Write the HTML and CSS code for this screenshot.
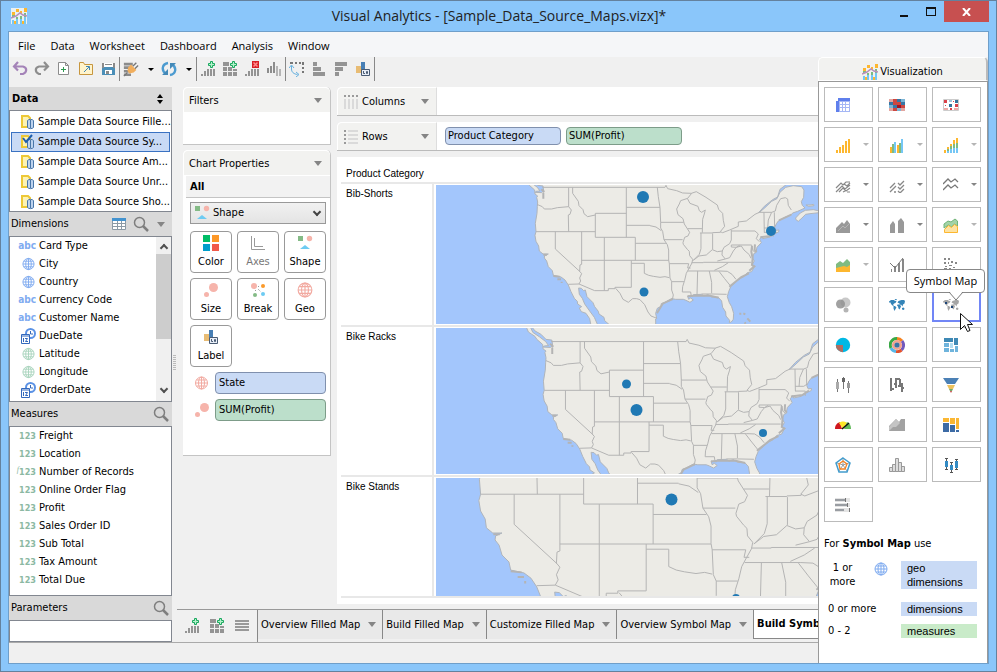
FILE: index.html
```html
<!DOCTYPE html>
<html lang="en">
<head>
<meta charset="utf-8">
<title>Visual Analytics</title>
<link rel="stylesheet" href="styles.css">
</head>
<body>
<svg class="defs" width="0" height="0" aria-hidden="true">
  <symbol id="logo" viewBox="0 0 16 16"><path fill="#fdb72f" d="M1 4h3v3H1zM5 1h3v3H5zM9 3h2v3H9zM13 0h3v4h-3z"/><path fill="#7dbb83" d="M1 7h3v2H1zM5 9h2v2H5zM9 8h2v3H9zM13 5h2v4h-2z"/><path fill="#75c7f5" d="M1 12h2v4H1zM5 11h2v5H5zM9 11h2v5H9zM13 9h2v7h-2z"/><path fill="#fdb72f" d="M3 13h2v3H3zM11 13h2v3h-2z"/><path fill="none" stroke="#b98fbb" stroke-width="1.5" d="M0 10l5-2 4-3 3 2 4 1"/></symbol>
  <symbol id="undo" viewBox="0 0 16 16"><path fill="none" stroke="#a483b8" stroke-width="2.2" d="M6 1L2 5.500l4 4M2 5.500h9c4.500 1 4 6 0 7.500H8"/></symbol>
  <symbol id="redo" viewBox="0 0 16 16"><path fill="none" stroke="#8d8d8d" stroke-width="2.200" d="M10 1l4 4.500-4 4M14 5.500H5c-4.500 1-4 6 0 7.500h2"/></symbol>
  <symbol id="new" viewBox="0 0 16 16"><path fill="#fff" stroke="#8c8c8c" d="M2.500 1.500h7l3 3v9h-10zM9.500 1.500v3h3"/><path stroke="#2e9b50" d="M7.500 6v5M5 8.500h5"/></symbol>
  <symbol id="open" viewBox="0 0 16 16"><path fill="#fff4cc" stroke="#c7963e" d="M1.500 1.500h4l1 2h8v10h-13z"/><path fill="none" stroke="#3f86b5" d="M6 11l5-5M8 5.500h3.500V9"/></symbol>
  <symbol id="save" viewBox="0 0 16 16"><path fill="#4b8fb8" d="M2 2h13v12H2z"/><path fill="#fff" d="M4 2h9v4H4zM5 9h7v4H5z"/><path fill="#8a8a8a" d="M2 2h2v5H2zM13 2h2v5h-2zM5 3h7v1H5zM6 10h3v3H6z"/></symbol>
  <symbol id="plug" viewBox="0 0 18 16"><path fill="#8b8b8b" d="M1 1h10v3H1zM1 5h8v3H1zM1 9h6v3H1zM1 13h8v3H1z"/><path stroke="#777" stroke-width="1.500" d="M11 5l4-4M13 8l4-4M5 12l-4 4"/><path fill="#f1ae5d" d="M9 3l6 6-3 3-5 1-2-3 1-4z"/></symbol>
  <symbol id="sync" viewBox="0 0 16 16"><path fill="none" stroke="#4c9bd0" stroke-width="2.400" d="M7 2C1 3 0 9 5 13M9 14c6-1 7-7 2-11"/><path fill="#4489b7" d="M1 14h6V8zM15 2H9v6z"/></symbol>
  <symbol id="addchart" viewBox="0 0 16 16"><path fill="#949494" d="M1 13h2v2H1zM4 10h2v5H4zM7 8h2v7H7zM10 8h2v7h-2zM13 8h2v7h-2z"/><path fill="#b5f0cb" stroke="#19a95e" d="M10.500.500h2v2h2v2h-2v2h-2v-2h-2v-2h2z"/></symbol>
  <symbol id="addgrid" viewBox="0 0 16 16"><path fill="#949494" d="M1 1h6v4H1zM1 6h4v4H1zM6 6h4v4H6zM11 8h4v2h-4zM1 11h4v4H1zM6 11h4v4H6zM11 11h4v4h-4z"/><path fill="#b5f0cb" stroke="#19a95e" d="M10.500.500h2v2h2v2h-2v2h-2v-2h-2v-2h2z"/></symbol>
  <symbol id="delchart" viewBox="0 0 16 16"><path fill="#949494" d="M1 13h2v2H1zM4 10h2v5H4zM7 8h2v7H7zM10 8h2v7h-2zM13 8h2v7h-2z"/><path fill="#d81f26" d="M8 0h7v7H8z"/><path stroke="#ff8d8d" stroke-width="1.500" d="M9.500 1.500l4 4M13.500 1.500l-4 4"/></symbol>
  <symbol id="bars" viewBox="0 0 16 16"><path fill="#8c8c8c" d="M1 7h2v5H1zM4 5h2v7H4zM7 1h2v11H7z"/><path fill="#b5b5b5" d="M10 5h2v10h-2zM13 8h2v7h-2z"/></symbol>
  <symbol id="swap" viewBox="0 0 16 16"><path fill="#777" d="M1 1h3v2H1zM6 1h2v2H6zM10 1h2v2h-2zM13 1h2v3h-2zM13 6h2v2h-2zM13 10h2v2h-2z"/><path fill="none" stroke="#66b0df" d="M2.500 5v3c0 3 2 5 6 5.500M0 7l2.500-3L5 7M7 11l3 2.500L7 16"/></symbol>
  <symbol id="sortasc" viewBox="0 0 16 16"><path fill="#949494" d="M2 1h4v4H2zM2 6h8v4H2zM2 11h12v4H2z"/></symbol>
  <symbol id="sortdesc" viewBox="0 0 16 16"><path fill="#949494" d="M2 1h12v4H2zM2 6h8v4H2zM2 11h4v4H2z"/></symbol>
  <symbol id="label" viewBox="0 0 16 16"><path fill="#e8bc74" d="M1 5h5v7H1z"/><path fill="#477fb5" d="M6 1h4v11H6z"/><path fill="#e8eef8" stroke="#4a5c74" d="M6.500 8.500h8v6h-8z"/><path fill="none" stroke="#4a5c74" d="M8.500 10v2.500H10M11.500 10.500h1v2h-1z"/></symbol>
  <symbol id="db" viewBox="0 0 16 16"><path fill="#fdf3b4" stroke="#edc836" stroke-width="2" d="M2 2h6l2 2v9H2z"/><path fill="#bed3ee" stroke="#4876a8" d="M7.500 6.500c1-1.500 5-1.500 6 0v7c-1 1.500-5 1.500-6 0zM10.500 6v8"/></symbol>
  <symbol id="check" viewBox="0 0 16 16"><path fill="none" stroke="#1f5dac" stroke-width="2" d="M3 4l3 4 6-7"/></symbol>
  <symbol id="globe" viewBox="0 0 14 14"><circle cx="7" cy="7" r="6" fill="#fff" stroke="currentColor"/><path fill="none" stroke="currentColor" d="M7 1v12M1 7h12M2 4h10M2 10h10"/><ellipse cx="7" cy="7" rx="3" ry="6" fill="none" stroke="currentColor"/></symbol>
  <symbol id="date" viewBox="0 0 16 16"><circle cx="10.500" cy="5.500" r="4.500" fill="#fff" stroke="#5b92e5" stroke-width="2"/><path fill="none" stroke="#3668b8" d="M10.500 3v3H13"/><path fill="#fff" stroke="#3369bd" d="M1.500 6.500h8v9h-8zM1 8h9"/><path fill="none" stroke="#3369bd" d="M3.500 10v4M5 10.500h2.500L5.500 13.500H8"/></symbol>
  <symbol id="search" viewBox="0 0 16 16"><circle cx="6.500" cy="6.500" r="5" fill="none" stroke="#7e7e7e" stroke-width="1.500"/><path stroke="#7e7e7e" stroke-width="2.500" d="M10 10l5 5"/></symbol>
  <symbol id="table" viewBox="0 0 14 12"><path fill="#fff" stroke="#8c9aa5" d="M.5.500h13v11H.500zM5.500 1v11M9.500 1v11M1 5.500h12M1 8.500h12"/><path fill="#4393cf" d="M0 0h14v3H0z"/></symbol>
  <symbol id="shape" viewBox="0 0 16 16"><path fill="#84bb86" d="M1 1h5v5H1z"/><circle cx="12.500" cy="3.500" r="2.700" fill="#f6b4ab"/><path fill="#6dcbf2" d="M8 10l5 4H3z"/></symbol>
  <symbol id="color" viewBox="0 0 16 16"><path fill="#00bd66" d="M0 0h7v7H0z"/><path fill="#fd9827" d="M9 0h7v7H9z"/><path fill="#009ecb" d="M0 9h7v7H0z"/><path fill="#f15a4a" d="M9 9h7v7H9z"/></symbol>
  <symbol id="axes" viewBox="0 0 16 16"><path fill="none" stroke="#999" d="M1.500 1v13.500H15M4.500 3v8.500H13"/></symbol>
  <symbol id="size" viewBox="0 0 16 16"><g fill="#f6b4ab"><circle cx="10.500" cy="5.500" r="4.500"/><circle cx="3.500" cy="12.500" r="2.500"/></g></symbol>
  <symbol id="break" viewBox="0 0 16 16"><circle cx="4" cy="4" r="3" fill="#f6b4ab"/><circle cx="13" cy="4" r="2" fill="#fb9a2b"/><circle cx="5" cy="13" r="2" fill="#84bb86"/><circle cx="13" cy="12" r="2" fill="#6dcbf2"/><path stroke="#999" stroke-dasharray="1 1" d="M8 4.500h2M8 7l3 3M5.500 8v2"/></symbol>
  <symbol id="colsi" viewBox="0 0 14 14"><path stroke="#9a9a9a" stroke-width="2" stroke-dasharray="2 2" d="M0 1h14"/><path stroke="#dadada" stroke-width="2" d="M1 4v10M5 4v10M9 4v10M13 4v10"/></symbol>
  <symbol id="rowsi" viewBox="0 0 14 14"><path stroke="#9a9a9a" stroke-width="2" stroke-dasharray="2 2" d="M1 0v14"/><path stroke="#dadada" stroke-width="2" d="M4 1h10M4 5h10M4 9h10M4 13h10"/></symbol>
  <symbol id="updown" viewBox="0 0 8 10"><path d="M4 0l3 4H1zM4 10l3-4H1z"/></symbol>
  <symbol id="list" viewBox="0 0 16 16"><path fill="#999" d="M1 2h14v2H1zM1 5h14v2H1zM1 8h14v2H1zM1 11h14v2H1z"/></symbol>

  <symbol id="v1" viewBox="0 0 16 16"><path fill="#5f7fec" d="M3 1h12v3H3zM1 4h3v11H1z"/><path fill="#a5b7f5" d="M4 4h11v11H4z"/><path fill="#fff" d="M5 5h2v2H5zM8 5h2v2H8zM11 5h3v2h-3zM5 8h2v2H5zM8 8h2v2H8zM11 8h3v2h-3zM5 11h2v3H5zM8 11h2v3H8zM11 11h3v3h-3z"/></symbol>
  <symbol id="v2" viewBox="0 0 16 16"><path fill="#3776a5" d="M0 2h16v12H0z"/><path fill="#cd4740" d="M4 2h4v3H4zM4 5h4v3H4zM8 5h4v3H8zM4 11h4v3H4zM12 8h4v3h-4z"/><path fill="#7db5d5" d="M12 2h4v3h-4zM0 8h4v3H0zM8 11h4v3H8z"/><path fill="#e2a5a0" d="M0 2h4v3H0zM0 11h4v3H0zM12 11h4v3h-4z"/><path fill="#a51220" d="M8 8h4v3H8z"/></symbol>
  <symbol id="v3" viewBox="0 0 16 16"><path fill="#fff" stroke="#ccc" d="M.5 2.500h15v11H.500z"/><path fill="#d9424b" d="M1 3h3v3H1zM12 7h3v3h-3zM7 11h2v2H7zM2 8h1v1H2zM10 4h1v1h-1z"/><path fill="#33749c" d="M6 7h3v3H6zM12 3h3v3h-3z"/><path fill="#edaaa7" d="M1 11h4v2H1zM11 11h4v2h-4z"/><path fill="#9fc6dd" d="M6 3h3v2H6z"/></symbol>
  <symbol id="v4" viewBox="0 0 16 16"><path fill="#fdb72f" d="M1 13h2v3H1zM4 10h2v6H4zM7 8h2v8H7zM10 4h2v12h-2zM13 2h2v14h-2z"/></symbol>
  <symbol id="v5" viewBox="0 0 16 16"><path fill="#fdb72f" d="M1 10h2v6H1zM8 8h2v8H8z"/><path fill="#80bb81" d="M3 7h2v9H3zM10 6h2v10h-2z"/><path fill="#75c7f5" d="M5 5h2v11H5zM12 2h2v14h-2z"/></symbol>
  <symbol id="v6" viewBox="0 0 16 16"><path fill="#fdb72f" d="M1 13h2v3H1zM4 10h2v3H4zM7 7h2v3H7zM10 3h2v4h-2zM13 1h2v5h-2z"/><path fill="#80bb81" d="M4 12h2v2H4zM7 9h2v3H7zM10 7h2v4h-2zM13 6h2v5h-2z"/><path fill="#75c7f5" d="M4 14h2v2H4zM7 12h2v4H7zM10 11h2v5h-2zM13 11h2v5h-2z"/></symbol>
  <symbol id="v7" viewBox="0 0 16 16"><g fill="none" stroke="#888" stroke-width="1.200"><path d="M1 11l5-5 2 2 3-3 4 0M1 15l6-6 3 3 5-4M4 15l4-4 3 3 4-3M9 7l3 2 3-3M8 15l2-1M12 15h3"/></g></symbol>
  <symbol id="v8" viewBox="0 0 16 16"><g fill="none" stroke="#888" stroke-width="1.300"><path d="M1 11l5-5M1 15l6-6M9 6l2 2 4-4M9 10l2 2 4-4M9 14l2 2 4-4M5 15h2"/></g></symbol>
  <symbol id="v9" viewBox="0 0 16 16"><g fill="none" stroke="#777" stroke-width="1.300"><path d="M0 7l5-5 3 3 4-3 3 3M0 13l5-5 3 3 4-3 3 3"/></g></symbol>
  <symbol id="v10" viewBox="0 0 16 16"><path fill="#999" d="M1 16v-5l6-6 2 2 3-4 3 4v9z"/><path fill="none" stroke="#b5b5b5" d="M3 14l5-5 2 2 4-4"/></symbol>
  <symbol id="v11" viewBox="0 0 16 16"><path fill="#999" d="M1 16V8l3-4 2 3v9zM9 16V4l3-3 3 4v11z"/></symbol>
  <symbol id="v12" viewBox="0 0 16 16"><path fill="#a3d3a7" stroke="#70b478" d="M1 11V7l4-3 3 1 4-3 2.500 2v5l-3-2-3 3-3-2z"/><path fill="#fde2a2" stroke="#fdb72f" d="M1.500 15.500v-3l4-4 3 2 3-3 3 2v6z"/></symbol>
  <symbol id="v13" viewBox="0 0 16 16"><path fill="#fdb72f" d="M1 15v-5l6-1 4-1 4-3v10z"/><path fill="#80bb81" d="M1 11V7l4-3 3 2 4-4 3 3v3l-3 2-3-1-4 1z"/></symbol>
  <symbol id="v14" viewBox="0 0 16 16"><path fill="#888" d="M2 12h1v3H2zM5 9h2v6H5zM9 6h2v9H9zM13 2h2v13h-2z"/><path fill="none" stroke="#777" d="M1 6l5 5 4-5 4-5"/></symbol>
  <symbol id="v15" viewBox="0 0 16 16"><path fill="#888" d="M1 1h2v2H1zM5 1h2v2H5zM1 5h2v2H1zM5 5h1v2H5zM8 4h2v2H8zM12 5h2v2h-2zM2 9h2v1H2zM6 8h3v1H6zM1 11h3v2H1zM6 11h2v2H6zM10 10h2v1h-2zM2 14h3v1H2zM9 13h2v1H9z"/></symbol>
  <symbol id="v16" viewBox="0 0 16 16"><circle cx="10.500" cy="5.500" r="5" fill="#c8c8c8"/><circle cx="5.500" cy="7" r="4.500" fill="#909090" opacity=".85"/><circle cx="11" cy="13" r="2.500" fill="#b4b4b4"/></symbol>
  <symbol id="world" viewBox="0 0 16 12"><path fill="currentColor" d="M0 2.500L2 1h3l1 1 1.500 0L6.500 4 5 4.500 4 6 5 7H4L2 5 1.500 3.500H0zM5.500 0h2.500L7 1.500zM4.500 7h1.500l1.500 1.500L6.500 10l-1 2-1-2.500zM8.500 3.500l1-1.500 3-1h2.500l1 1-.5 2.500-1.500 1-.5 2-1.500-2-1 .5-.5-1.500zM8.500 5.500h2.500l1 2-1.500 3-1-1-.500-2-1-1zM13 9l1.500-.5 1 1-.500 1.500-2-.500z"/></symbol>
  <symbol id="v19" viewBox="0 0 16 16"><circle cx="8" cy="8" r="7.200" fill="#00b8e4"/><path fill="#b06d61" d="M8 8v7.200A7.200 7.200 0 0 1 .8 8z"/></symbol>
  <symbol id="v20" viewBox="0 0 16 16"><g fill="none"><g stroke-width="3"><path stroke="#f58220" d="M8 1.500A6.500 6.500 0 0 1 13 4"/><path stroke="#7159bd" d="M13 4a6.500 6.500 0 0 1-.500 9"/><path stroke="#e2522d" d="M12.500 13A6.500 6.500 0 0 1 7 14.500"/><path stroke="#57b7e8" d="M7 14.500A6.500 6.500 0 0 1 2 11"/><path stroke="#39a845" d="M2 11A6.500 6.500 0 0 1 8 1.500"/></g><circle cx="8" cy="8" r="3.800" stroke="#f2a28e" stroke-width="2.500"/></g><circle cx="8" cy="8" r="2.600" fill="#3a73a5"/></symbol>
  <symbol id="v21" viewBox="0 0 16 16"><path fill="#3e89b5" d="M1 1h9v4H1zM11 1h4v7h-4z"/><path fill="#6fb4dc" d="M1 6h5v4H1zM1 11h5v4H1zM7 12h4v3H7zM12 9h3v6h-3z"/><path fill="#b3ddf1" d="M7 6h3v5H7z"/></symbol>
  <symbol id="v22" viewBox="0 0 16 16"><path stroke="#777" d="M2.500 2v13M8.500 0v12M13.500 4v12"/><path fill="#aaa" d="M1 5h3v7H1z"/><path fill="#666" d="M7 1h3v4H7z"/><path fill="#999" d="M12 6h3v5h-3z"/></symbol>
  <symbol id="v23" viewBox="0 0 16 16"><path fill="none" stroke="#777" stroke-width="2" d="M2 1v13M2 12h3M7 1v10M5 7h2M7 2h4M11 2v8M9 9h2M13 6v9M13 11h2"/></symbol>
  <symbol id="v24" viewBox="0 0 16 16"><path fill="#4b80b5" d="M0 1h16l-4 6H4z"/><path fill="#edc25e" d="M4 8h8l-2 4H6z"/><path fill="#75a766" d="M6 12h4l-1 2H7z"/><path fill="#c03b3b" d="M7 14h2l-1 2z"/></symbol>
  <symbol id="v25" viewBox="0 0 16 16"><path fill="#cf1820" d="M0 12c0-4 2-6 5-7l2 7z"/><path fill="#ffe629" d="M4 6c2-2 6-2 8 0l-4 6z"/><path fill="#62ba5b" d="M12 5c3 1 4 4 4 7H9z"/><path stroke="#111" stroke-width="1.500" d="M7 12l7-6"/></symbol>
  <symbol id="v26" viewBox="0 0 16 16"><path fill="#a2a2a2" d="M0 14V9l7-7 3 3 2-3h4v12z"/><path fill="#c4c4c4" d="M0 14v-4l7-8 4 4-4 4-3 0z"/></symbol>
  <symbol id="v27" viewBox="0 0 16 16"><path fill="#fbb733" d="M0 1h6v4H0zM7 1h5v6H7zM13 1h3v11h-3z"/><path fill="#3d6ba5" d="M0 6h6v9H0zM7 8h5v7H7zM13 13h3v2h-3z"/></symbol>
  <symbol id="v28" viewBox="0 0 16 16"><g fill="none"><path stroke="#888" stroke-width=".8" d="M8 8V1M8 8l6-2M8 8l4 6M8 8l-4 6M8 8L2 6"/><path stroke="#429ccd" stroke-width="1.500" d="M8 1l7 5-3 9H4L1 6z"/><path stroke="#f58220" stroke-width="1.300" d="M8 4l4 3-2 5H5L4 7z"/></g></symbol>
  <symbol id="v29" viewBox="0 0 16 16"><path fill="#ddd" stroke="#999" d="M.5 14.500v-4h3v4zM3.500 14.500v-7h3v7zM6.500 14.500v-13h3v13zM9.500 14.500v-9h3v9zM12.500 14.500v-5h3v5z"/></symbol>
  <symbol id="v30" viewBox="0 0 16 16"><path stroke="#555" d="M3.500 1v12M2 1.500h3M2 12.500h3M8.500 5v11M7 5.500h3M7 15.500h3M13.500 2v11M12 2.500h3M12 12.500h3"/><path fill="#338bc4" d="M2 4h3v6H2zM7 8h3v5H7zM12 4h3v7h-3z"/></symbol>
  <symbol id="v31" viewBox="0 0 16 16"><path fill="#e4e4e4" d="M0 1h15v4H0zM0 6h15v4H0zM0 11h15v4H0z"/><path fill="#999da2" d="M0 2h10v2H0zM0 7h13v2H0zM0 12h9v2H0z"/><path stroke="#777" d="M10.500 1v4M12.500 6v4M14.500 11v4"/></symbol>

  <g id="usa">
    <g class="sea">
      <path d="M549 270L560 296L578 308L583 316L599 330L600 342L608 348L605 352L608 366L607 380L606 400L601 430L603 455L600 466L603 484L611 498L613 513L624 522L640 522L629 527L628 534L635 543L640 560L652 572L655 586L678 591L690 600L700 615L708 635L718 655L727 664L728 672L740 680L733 684L739 695L753 700L764 716L768 736L770 800H200V270z"/>
      <path d="M731 624L739 625L746 632L751 630L756 650L774 668L779 680L790 694L792 702L807 712L809 722L824 735V800H790L786 730L778 712L764 693L749 672L742 655L733 643z"/>
      <path d="M560 270L578 293L594 302L608 316L624 318L626 332L620 338L600 337L603 334L615 333L607 322L590 309L572 297z"/>
      <g transform="translate(885 210)">
        <path d="M78 600L77 507L80 505L77 490L82 475L93 469L94 461L105 457L125 446L137 448L160 448L168 451L180 457L190 450L182 444L176 448L173 438L188 440L190 434L215 433L222 438L234 434L245 441L265 442L275 453L278 472L287 486L288 498L299 511L298 518L304 516L310 508L311 490L305 470L298 458L292 440L296 425L302 411L318 395L330 386L342 380L352 368L365 365L374 348L366 345L373 333L368 325L372 310L378 308L381 292L394 278L389 268L396 259L398 266L420 261L428 254L435 250L446 246L447 240L438 241L434 232L440 220L446 212L465 202L483 195L488 189L503 184L525 174L517 166L514 155L521 142L522 120L515 110L490 107L467 112L450 127L441 146L425 154L405 173L390 186L386 188L403 169L428 149L443 141L450 118L466 106L482 94L600 80V600z"/>
        <path class="land" d="M497 204L511 189L526 181L550 179L564 182L578 187L540 191L527 193L516 204L505 214L498 209zM528 165L536 169L552 167L551 163L540 165zM550 96L564 94V104L555 103z"/>
      </g>
    </g>
    <g class="line">
      <path d="M622 322H990M608 374L622 380L628 387L650 387L667 383L701 380M701 322V380L709 390L705 403L700 405L701 455M713 322V340L730 364L732 377L744 389L747 401L758 410L781 405M781 400H874M781 400V472H901M874 322V472M874 382H975M874 436H945M603 455H781M661 455V507L735 575M740 455V553L735 555L734 574L740 581L734 594L737 603L732 612L700 613M732 612L779 632H820V626H840V622H889M808 472V632M740 541H1001M901 472V541M901 490H993M889 541V622M889 550H928V580L941 586L955 589L975 592L990 590L1003 593M842 625L855 640L864 658L880 667L893 656L905 656L915 659L929 674L939 696L948 708L966 715"/>
      <g transform="translate(885 210)">
        <path d="M105 112L108 106L113 116L140 122L158 129L184 130L199 125L228 142L262 165L266 178L278 190L280 211L284 229L271 245L278 248L299 240L325 229L325 216L349 213L375 193L388 187L425 187L436 183L440 166L452 146L466 143L473 147L475 166L484 180M60 227L78 231L94 242M82 112L85 140L90 172L92 217H161M92 217L92 234L98 244L102 269H158M102 269L112 284L116 300V330L118 341H176L173 354L182 354M118 341L120 384L125 395H162M125 395V420L130 435L127 450M185 130L173 145L152 152L148 162L140 177L144 194L159 206L163 222L172 236H216M172 145L180 160L204 169L208 182L215 187L226 180L223 192L218 208L217 248M172 236L179 247L174 258L164 262L159 278L160 283L172 298L178 304L179 317L188 328L186 339L176 357L169 370L164 391L158 410L157 426H182L184 439M213 249V296L208 313L190 331M210 249H247M247 248L272 247M248 250V298M190 331L207 318L229 315L247 299L262 305L277 303L282 292L299 281L304 270V240M304 243H375L385 252L379 266L388 275M304 285H365L369 302L376 307M402 187L403 247M425 187L415 210L413 235M433 187L434 230M402 234H426L435 228M402 247H430V260M277 303L276 315L286 327L299 323L310 303L319 292L334 288L342 300L358 314L363 325M304 285V291L319 292L329 286M262 333L286 327M185 338H220V337H363M295 338L277 350L253 361M174 363H270L292 364L306 373L318 388M267 364L284 386L301 407M203 363L201 437M238 363L245 397V430M215 432H245L290 433"/>
        <path class="shore" d="M173 439L190 437L240 437L266 443M366 288L364 305L368 325L366 345L373 349L358 362M375 283L374 299L380 306M391 262L422 258L440 246M447 211L484 194M81 490L98 461L128 447M298 410L334 381L357 370M328 491h6M340 490l6 3M352 505l9 10M344 517l3 4"/>
      </g>
      <path class="shore" d="M625 338V356M619 328L628 336M625 524H636M655 588L674 590M667 598H678M680 605V609"/>
    </g>
  </g>
</svg>

<div class="window">
  <header class="titlebar">
    <svg class="i logo"><use href="#logo"/></svg>
    <h1>Visual Analytics - [Sample_Data_Source_Maps.vizx]*</h1>
    <div class="winbtns">
      <button aria-label="Minimize"><i class="min"></i></button>
      <button aria-label="Maximize"><i class="max"></i></button>
      <button class="close" aria-label="Close"><svg width="9" height="8" viewBox="0 0 9 8"><path stroke="#fff" stroke-width="2" d="M1 0l7 8M8 0L1 8"/></svg></button>
    </div>
  </header>

  <div class="client">
    <nav class="menu"><button>File</button><button>Data</button><button>Worksheet</button><button>Dashboard</button><button>Analysis</button><button>Window</button></nav>

    <div class="body">
      <div class="left">
        <div class="toolbar">
          <button aria-label="Undo"><svg class="i"><use href="#undo"/></svg></button>
          <button aria-label="Redo"><svg class="i"><use href="#redo"/></svg></button>
          <button aria-label="New"><svg class="i"><use href="#new"/></svg></button>
          <button aria-label="Open"><svg class="i"><use href="#open"/></svg></button>
          <button aria-label="Save"><svg class="i"><use href="#save"/></svg></button>
          <span class="sep"></span>
          <button class="drop" aria-label="Connect"><svg class="i"><use href="#plug"/></svg><i class="caret dark"></i></button>
          <button class="drop" aria-label="Refresh"><svg class="i"><use href="#sync"/></svg><i class="caret dark"></i></button>
          <span class="sep"></span>
          <button aria-label="Add worksheet"><svg class="i"><use href="#addchart"/></svg></button>
          <button aria-label="Add dashboard"><svg class="i"><use href="#addgrid"/></svg></button>
          <button aria-label="Delete worksheet"><svg class="i"><use href="#delchart"/></svg></button>
          <button aria-label="Duplicate"><svg class="i"><use href="#bars"/></svg></button>
          <span class="sep"></span>
          <button aria-label="Swap axes"><svg class="i"><use href="#swap"/></svg></button>
          <button aria-label="Sort ascending"><svg class="i"><use href="#sortasc"/></svg></button>
          <button aria-label="Sort descending"><svg class="i"><use href="#sortdesc"/></svg></button>
          <button aria-label="Labels"><svg class="i"><use href="#label"/></svg></button>
          <span class="sep"></span>
        </div>

        <div class="work">
          <aside class="sidebar">
            <h2 class="main"><span>Data</span><svg width="8" height="10"><use href="#updown"/></svg></h2>
            <ul class="box sources">
              <li><svg class="i"><use href="#db"/></svg>Sample Data Source Fille...</li>
              <li class="sel"><svg class="i"><use href="#db"/><use href="#check"/></svg>Sample Data Source Sy...</li>
              <li><svg class="i"><use href="#db"/></svg>Sample Data Source Am...</li>
              <li><svg class="i"><use href="#db"/></svg>Sample Data Source Unr...</li>
              <li><svg class="i"><use href="#db"/></svg>Sample Data Source Sho...</li>
            </ul>
            <h2><span>Dimensions</span><svg width="14" height="12"><use href="#table"/></svg><svg class="i"><use href="#search"/></svg><i class="caret"></i></h2>
            <div class="box dims">
              <ul class="fields">
                <li><b class="abc">abc</b>Card Type</li>
                <li><svg class="g blue"><use href="#globe"/></svg>City</li>
                <li><svg class="g blue"><use href="#globe"/></svg>Country</li>
                <li><b class="abc">abc</b>Currency Code</li>
                <li><b class="abc">abc</b>Customer Name</li>
                <li><svg class="i"><use href="#date"/></svg>DueDate</li>
                <li><svg class="g green"><use href="#globe"/></svg>Latitude</li>
                <li><svg class="g green"><use href="#globe"/></svg>Longitude</li>
                <li><svg class="i"><use href="#date"/></svg>OrderDate</li>
              </ul>
              <div class="scroll"><i class="up"></i><span class="thumb"></span><i class="down"></i></div>
            </div>
            <h2><span>Measures</span><svg class="i"><use href="#search"/></svg></h2>
            <ul class="box fields meas">
              <li><b class="num">123</b>Freight</li>
              <li><b class="num">123</b>Location</li>
              <li><b class="num"><em>f</em>123</b>Number of Records</li>
              <li><b class="num">123</b>Online Order Flag</li>
              <li><b class="num">123</b>Profit</li>
              <li><b class="num">123</b>Sales Order ID</li>
              <li><b class="num">123</b>Sub Total</li>
              <li><b class="num">123</b>Tax Amount</li>
              <li><b class="num">123</b>Total Due</li>
            </ul>
            <h2><span>Parameters</span><svg class="i"><use href="#search"/></svg></h2>
            <div class="box params"></div>
          </aside>
          <div class="grip"><i></i></div>

          <div class="stage">
            <div class="panes">
              <section class="props">
                <div class="card filters">
                  <h3><span>Filters</span><i class="caret"></i></h3>
                </div>
                <div class="card chart">
                  <h3><span>Chart Properties</span><i class="caret"></i></h3>
                  <h4>All</h4>
                  <div class="marks">
                    <button class="combo"><svg class="i"><use href="#shape"/></svg><span>Shape</span><i class="chev"></i></button>
                    <div class="tiles">
                      <button><svg class="i"><use href="#color"/></svg>Color</button>
                      <button class="off"><svg class="i"><use href="#axes"/></svg>Axes</button>
                      <button><svg class="i"><use href="#shape"/></svg>Shape</button>
                      <button><svg class="i"><use href="#size"/></svg>Size</button>
                      <button><svg class="i"><use href="#break"/></svg>Break</button>
                      <button><svg class="i pink"><use href="#globe"/></svg>Geo</button>
                      <button><svg class="i"><use href="#label"/></svg>Label</button>
                    </div>
                    <div class="enc"><svg class="g pink"><use href="#globe"/></svg><span class="pill dim">State</span></div>
                    <div class="enc"><svg class="i"><use href="#size"/></svg><span class="pill mea">SUM(Profit)</span></div>
                  </div>
                </div>
              </section>

              <main class="canvas">
                <div class="shelf"><div class="head"><svg class="g"><use href="#colsi"/></svg><span>Columns</span><i class="caret"></i></div></div>
                <div class="shelf"><div class="head"><svg class="g"><use href="#rowsi"/></svg><span>Rows</span><i class="caret"></i></div><span class="pill dim">Product Category</span><span class="pill mea">SUM(Profit)</span></div>
                <div class="sheet">
                  <table>
                    <thead><tr><th colspan="2">Product Category</th></tr></thead>
                    <tbody>
                      <tr><th>Bib-Shorts</th><td><svg class="map" height="139"><use href="#usa" transform="scale(.3333) translate(-303 -315)"/><circle cx="207" cy="12" r="6"/><circle cx="335" cy="46" r="5"/><circle cx="208" cy="107" r="4.500"/></svg></td></tr>
                      <tr><th>Bike Racks</th><td><svg class="map" height="146"><use href="#usa" transform="scale(.3667) translate(-308 -285)"/><circle cx="190.500" cy="56" r="4.500"/><circle cx="200.500" cy="82" r="6"/><circle cx="327" cy="105" r="4"/></svg></td></tr>
                      <tr><th>Bike Stands</th><td><svg class="map" height="118"><use href="#usa" transform="scale(.579) translate(-526 -427)"/><circle cx="235.500" cy="21.500" r="6"/><circle cx="300" cy="120" r="4"/></svg></td></tr>
                    </tbody>
                  </table>
                </div>
              </main>
            </div>

            <div class="tabs">
              <div class="tools">
                <button aria-label="Add worksheet"><svg class="i"><use href="#addchart"/></svg></button>
                <button aria-label="Add dashboard"><svg class="i"><use href="#addgrid"/></svg></button>
                <button aria-label="List sheets"><svg class="i"><use href="#list"/></svg></button>
              </div>
              <button class="tab">Overview Filled Map<i class="caret"></i></button>
              <button class="tab">Build Filled Map<i class="caret"></i></button>
              <button class="tab">Customize Filled Map<i class="caret"></i></button>
              <button class="tab">Overview Symbol Map<i class="caret"></i></button>
              <button class="tab on">Build Symb</button>
            </div>
          </div>
        </div>
        <footer class="status"></footer>
      </div>

      <aside class="viz">
        <h2><svg class="i"><use href="#logo"/></svg>Visualization</h2>
        <div class="vbody">
          <div class="cells">
            <button aria-label="Text table"><svg class="i"><use href="#v1"/></svg></button>
            <button aria-label="Heat map"><svg class="i"><use href="#v2"/></svg></button>
            <button aria-label="Highlight table"><svg class="i"><use href="#v3"/></svg></button>
            <button aria-label="Bar"><svg class="i"><use href="#v4"/></svg><i class="caret light"></i></button>
            <button aria-label="Grouped bar"><svg class="i"><use href="#v5"/></svg><i class="caret light"></i></button>
            <button aria-label="Stacked bar"><svg class="i"><use href="#v6"/></svg><i class="caret light"></i></button>
            <button aria-label="Line"><svg class="i"><use href="#v7"/></svg><i class="caret"></i></button>
            <button aria-label="Discrete line"><svg class="i"><use href="#v8"/></svg><i class="caret"></i></button>
            <button aria-label="Multiple lines"><svg class="i"><use href="#v9"/></svg><i class="caret"></i></button>
            <button aria-label="Area"><svg class="i"><use href="#v10"/></svg><i class="caret"></i></button>
            <button aria-label="Discrete area"><svg class="i"><use href="#v11"/></svg><i class="caret"></i></button>
            <button aria-label="Overlaid area"><svg class="i"><use href="#v12"/></svg><i class="caret light"></i></button>
            <button aria-label="Stacked area"><svg class="i"><use href="#v13"/></svg><i class="caret light"></i></button>
            <button aria-label="Combination"><svg class="i"><use href="#v14"/></svg></button>
            <button aria-label="Scatter"><svg class="i"><use href="#v15"/></svg></button>
            <button aria-label="Bubble"><svg class="i"><use href="#v16"/></svg></button>
            <button aria-label="Filled Map"><svg class="i steel"><use href="#world"/></svg></button>
            <button class="hot" aria-label="Symbol Map"><svg class="i grey"><use href="#world"/><path fill="#1d4577" d="M2 3h2v2H2zM8 7h2v2H8z"/></svg>
              <span class="tip">Symbol Map<svg width="14" height="10" viewBox="0 0 14 10"><path fill="#fff" d="M0 0h14L7 9z"/><path fill="none" stroke="#777" d="M0 1l7 8 7-8"/></svg></span>
              <svg class="cursor" width="13" height="20" viewBox="0 0 13 20"><path fill="#fff" stroke="#111" d="M.5.500v16l4-4 3 6 2.500-1-2.500-6h5z"/></svg>
            </button>
            <button aria-label="Pie"><svg class="i"><use href="#v19"/></svg></button>
            <button aria-label="Sunburst"><svg class="i"><use href="#v20"/></svg></button>
            <button aria-label="Tree map"><svg class="i"><use href="#v21"/></svg></button>
            <button aria-label="Candlestick"><svg class="i"><use href="#v22"/></svg></button>
            <button aria-label="Open high low close"><svg class="i"><use href="#v23"/></svg></button>
            <button aria-label="Funnel"><svg class="i"><use href="#v24"/></svg></button>
            <button aria-label="Gauge"><svg class="i"><use href="#v25"/></svg></button>
            <button aria-label="Range area"><svg class="i"><use href="#v26"/></svg></button>
            <button aria-label="Marimekko"><svg class="i"><use href="#v27"/></svg></button>
            <button aria-label="Radar"><svg class="i"><use href="#v28"/></svg></button>
            <button aria-label="Histogram"><svg class="i"><use href="#v29"/></svg></button>
            <button aria-label="Box plot"><svg class="i"><use href="#v30"/></svg></button>
            <button aria-label="Bullet"><svg class="i"><use href="#v31"/></svg></button>
          </div>
          <p>For <b>Symbol Map</b> use</p>
          <div class="needs">
            <div class="need"><span class="qty">1 or<br>more</span><svg class="g blue"><use href="#globe"/></svg><span class="kind">geo<br>dimensions</span></div>
            <div class="need"><span class="wide">0 or more</span><span class="kind">dimensions</span></div>
            <div class="need"><span class="wide">0 - 2</span><span class="kind gm">measures</span></div>
          </div>
        </div>
      </aside>
    </div>
  </div>
</div>
</body>
</html>
```
FILE: styles.css
```css
* { box-sizing: border-box; }
html, body { height: 100%; }
body, h1, h2, h3, h4, p, ul { margin: 0; padding: 0; }
ul { list-style: none; }
body {
  font: 11px/14px "DejaVu Sans Condensed", "Noto Sans", sans-serif;
  color: #000;
  overflow: hidden;
}
button {
  font: inherit;
  color: inherit;
  background: none;
  border: 0;
  padding: 0;
  display: flex;
  align-items: center;
}
svg { display: block; flex: none; overflow: hidden; }
.defs { position: absolute; }
.i { width: 16px; height: 16px; }
.g { width: 14px; height: 14px; }
.blue { color: #7fabf0; }
.green { color: #a9d4bd; }
.pink { color: #f2aaa1; }
.steel { color: #3484b8; }
.grey { color: #a5a5a5; }
.caret {
  flex: none;
  border: 4px solid transparent;
  border-top: 5px solid #858585;
  border-bottom: 0;
}
.caret.dark { border-width: 3px; border-top-color: #000; border-bottom: 0; }

.window {
  height: 100vh;
  display: flex;
  flex-direction: column;
  padding: 0 7px 7px 7px;
  border: 1px solid #64819d;
  background: #8ac6fa;
}
.titlebar { display: flex; height: 30px; flex: none; align-items: center; }
.logo { background: #e9f1f4; margin-left: 3px; }
h1 {
  flex: 1;
  font: 14px/20px "Open Sans", sans-serif;
  text-align: center;
  color: #222;
  padding-left: 81px;
}
.winbtns { display: flex; align-self: flex-start; }
.winbtns button { width: 27px; height: 21px; justify-content: center; }
.winbtns .close { width: 45px; background: #c75050; }
.min { width: 8px; height: 2px; background: #111; margin-top: 8px; }
.max { width: 10px; height: 9px; border: 1px solid #111; border-top-width: 2px; }

.client {
  flex: 1;
  display: flex;
  flex-direction: column;
  min-height: 0;
  border: 1px solid #6f9fca;
  background: #f0f0f0;
}
.menu {
  display: flex;
  gap: 15px;
  height: 25px;
  padding: 3px 0 0 9px;
  background: #f5f6f8;
  font: 11px/16px "Open Sans", sans-serif;
}
.body { flex: 1; display: flex; min-height: 0; }
.left { flex: 1; min-width: 0; display: flex; flex-direction: column; }

.toolbar { display: flex; align-items: center; height: 29px; flex: none; gap: 6px; padding: 0 3px 5px; }
.toolbar .sep { width: 1px; height: 24px; background: #888; margin: 0 -3px; }
.toolbar .drop { gap: 9px; }
.toolbar .caret { margin-right: 1px; }

.work { flex: 1; display: flex; min-height: 0; border-bottom: 1px solid #aaa; }
.sidebar { width: 163px; display: flex; flex-direction: column; }
.sidebar h2 {
  display: flex;
  align-items: center;
  gap: 7px;
  height: 24px;
  flex: none;
  padding: 0 3px 0 2px;
  background: #d9d9d9;
  font-size: 11px;
  font-weight: normal;
}
.sidebar h2 span { flex: 1; }
.sidebar h2.main { height: 23px; font-weight: bold; padding: 0 8px 0 3px; margin-top: 1px; }
.sidebar h2 .caret { margin: 0 4px 0 1px; }
.box { border: 1px solid #828790; background: #fff; }
.sources { height: 102px; flex: none; padding: 1px 0 0 1px; overflow: hidden; }
.sources li { display: flex; align-items: center; gap: 2px; height: 20px; flex: none; padding-left: 9px; white-space: nowrap; }
.sources .sel { background: #c9daf5; border: 1px solid #3a72c2; padding-left: 8px; margin-right: 1px; }
.dims { display: flex; height: 166px; flex: none; overflow: hidden; }
.dims ul { flex: 1; }
.fields li { display: flex; align-items: center; height: 18px; }
.fields li > svg.g { margin: 0 4px 0 12px; width: 13px; }
.fields li > svg.i { margin: 0 3px 0 10px; }
.fields b { width: 29px; padding-right: 4px; text-align: right; }
.fields .abc { color: #7fabf0; font-size: 10px; padding-right: 3px; }
.fields .num { color: #8cb9a3; font: bold 9px/12px "DejaVu Sans Condensed", sans-serif; padding-right: 3px; }
.num em { font: italic 8px/8px "Liberation Serif", serif; vertical-align: top; }
.meas { flex: 1; }
.params { height: 22px; flex: none; }
.scroll { width: 15px; background: #f0f0f0; display: flex; flex-direction: column; align-items: center; }
.scroll .thumb { width: 15px; height: 85px; background: #cdcdcd; }
.scroll i { width: 6px; height: 6px; border: solid #505050; border-width: 2px 0 0 2px; transform: rotate(45deg); margin: 8px 0 3px; }
.scroll .down { transform: rotate(225deg); margin: auto 0 9px; }
.grip { width: 5px; display: flex; align-items: center; justify-content: center; }
.grip i { width: 3px; height: 16px; background: repeating-linear-gradient(#bbb 0 1px, transparent 1px 2px); margin-bottom: 2px; }

.stage { flex: 1; min-width: 0; display: flex; flex-direction: column; }
.panes { flex: 1; display: flex; gap: 6px; min-height: 0; padding: 1px 0 0 6px; }
.props { width: 148px; display: flex; flex-direction: column; gap: 5px; }
.card { background: #fff; border: solid #c4c4c4; border-width: 0 1px 1px 0; border-radius: 5px 5px 0 0; }
.filters { height: 58px; }
.chart { height: 306px; }
.card h3 {
  display: flex;
  align-items: center;
  height: 26px;
  padding: 1px 8px 0 5px;
  background: #f2f2f0;
  border: 1px solid #fff;
  border-right: 0;
  border-radius: 5px 5px 0 0;
  font-size: 11px;
  font-weight: normal;
}
.card h3 span { flex: 1; }
.card h4 { height: 22px; margin-left: 3px; padding: 4px; font-size: 11px; border-bottom: 1px solid #c4c4c4; background: #f2f2f2; }
.marks { padding: 4px 4px 0 7px; display: flex; flex-direction: column; gap: 5px; }
.combo { height: 22px; border: 1px solid #999; background: linear-gradient(#f1f1f1, #e4e4e4); padding: 0 5px 0 3px; gap: 3px; }
.combo span { flex: 1; text-align: left; }
.chev { width: 6px; height: 6px; border: solid #444; border-width: 0 2px 2px 0; transform: rotate(45deg); margin-bottom: 3px; }
.tiles { display: grid; grid-template-columns: repeat(3, 42px); gap: 5px; justify-content: space-between; padding-top: 2px; }
.tiles button { flex-direction: column; justify-content: space-between; height: 42px; padding: 3px 0; border: 1px solid #999; border-radius: 4px; }
.tiles .off { color: #777; }
.enc { display: flex; align-items: center; gap: 5px; padding-left: 4px; }
.enc .g { margin-right: 1px; width: 15px; }
.pill { height: 22px; padding: 3px; border: 1px solid #8090ad; border-radius: 4px; background: #c9daf5; flex: 1; }
.pill.mea { background: #bcdfcb; border-color: #7d9c89; }

.canvas { flex: 1; min-width: 0; display: flex; flex-direction: column; gap: 6px; overflow: hidden; }
.shelf { display: flex; align-items: center; height: 29px; background: #fff; border-bottom: 1px solid #bbb; border-radius: 5px 0 0 0; gap: 5px; flex: none; }
.shelf .head { display: flex; align-items: center; gap: 4px; width: 100px; height: 28px; padding: 0 7px 0 6px; margin-right: 3px; background: #f2f2f0; border: 1px solid #fff; border-right-color: #ddd; border-bottom: 0; border-radius: 5px 0 0 0; }
.shelf .head span { flex: 1; }
.shelf .pill { flex: none; width: 116px; height: 18px; padding: 1px 2px; }
.sheet { height: 447px; padding: 0 0 6px 4px; background: #fff; overflow: hidden; }
.sheet table { border-spacing: 0; width: 100%; font: 10px/12px "Liberation Sans", sans-serif; }
.sheet th { font-weight: normal; text-align: left; vertical-align: top; padding: 4px 5px; border-bottom: 2px solid #e8e8e8; }
.sheet thead th { height: 27px; vertical-align: bottom; padding: 0 5px 2px; }
.sheet tbody th { width: 93px; border-right: 2px solid #e8e8e8; }
.sheet td { padding: 1px 0 1px 2px; border-bottom: 2px solid #e8e8e8; }
.sheet tr:last-child td { padding-bottom: 0; }
.map { width: 100%; background: #ecebe6; }
.map circle { fill: #2079b4; }
.sea path { fill: #a3c6fc; stroke: #b0b5bb; vector-effect: non-scaling-stroke; }
.sea .land { fill: #ecebe6; }
.line path { fill: none; stroke: #b4b4b4; stroke-width: 1px; vector-effect: non-scaling-stroke; }
.line .shore { stroke-width: 2px; }

.tabs { display: flex; height: 33px; flex: none; margin-top: 5px; border-top: 1px solid #999; overflow: hidden; }
.tools { display: flex; align-items: center; gap: 9px; width: 81px; flex: none; padding-left: 7px; border-right: 1px solid #888; }
.tab { height: 29px; flex: none; gap: 8px; padding: 0 6px 0 3px; background: #e9e9e9; border-right: 1px solid #888; white-space: nowrap; }
.tab.on { flex: 1; background: #fff; font-weight: bold; padding: 0 0 0 3px; border: 0; border-bottom: 1px solid #888; }
.status { height: 20px; flex: none; }

.viz { width: 170px; flex: none; display: flex; flex-direction: column; }
.viz h2 { display: flex; align-items: center; justify-content: center; gap: 2px; height: 24px; border: 1px solid #fff; border-right: 2px solid #bbb; border-radius: 5px 5px 0 0; background: #f2f2f0; font-size: 11px; font-weight: normal; padding-top: 5px; }
.vbody { flex: 1; background: #fff; border: 1px solid #999; border-bottom: 0; padding: 5px; }
.cells { display: grid; grid-template-columns: repeat(3, 49px); gap: 5px; }
.cells button { position: relative; height: 35px; padding: 0 3px 0 10px; border: 1px solid #bbb; justify-content: space-between; }
.cells .caret { border-left-width: 3px; border-right-width: 3px; border-top-width: 3px; }
.cells .light { border-top-color: #b5b5b5; }
.cells .i.steel, .cells .i.grey { height: 12px; }
.cells .hot { border: 2px solid #7186f6; padding-left: 9px; }
.tip { position: absolute; right: -6px; bottom: 27px; z-index: 1; width: 79px; height: 24px; padding: 3px 0; border: 1px solid #888; border-radius: 4px; background: #fff; font: 11px/16px "Open Sans", sans-serif; }
.tip svg { position: absolute; left: 42px; top: 21px; }
.cursor { position: absolute; left: 26px; top: 24px; z-index: 1; }
.viz p { margin: 15px 0 10px; }
.needs { display: flex; flex-direction: column; gap: 8px; }
.need { display: flex; align-items: center; padding-left: 4px; }
.need:first-child { margin-bottom: 5px; align-items: flex-start; }
.qty { width: 29px; text-align: center; flex: none; }
.qty + svg { margin: 1px 13px 0 17px; }
.wide { width: 73px; }
.kind { width: 76px; padding-left: 6px; background: #c9daf5; font-family: "Liberation Sans", sans-serif; }
.kind.gm { background: #c9ebc9; }
```
